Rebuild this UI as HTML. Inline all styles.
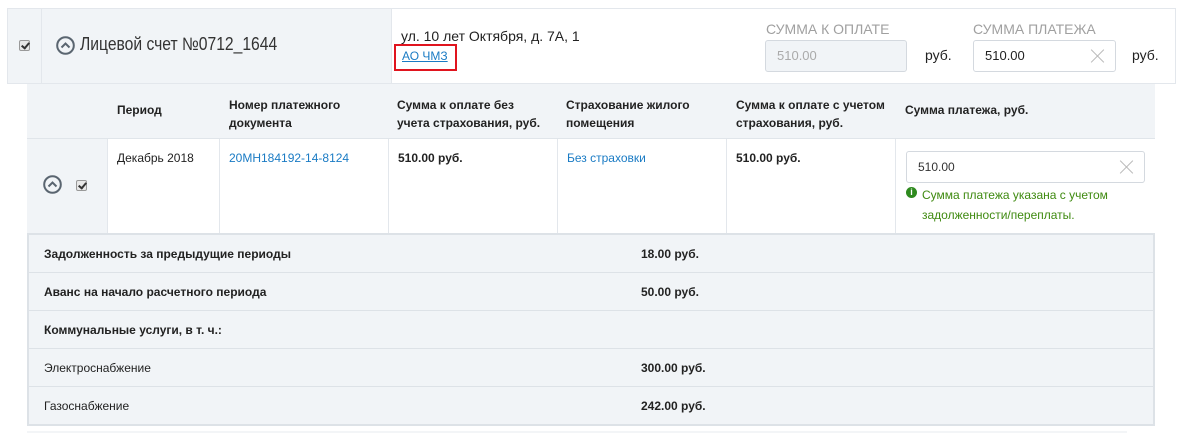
<!DOCTYPE html>
<html><head><meta charset="utf-8"><style>
*{box-sizing:border-box;margin:0;padding:0}
body{width:1194px;height:433px;background:#fff;font-family:"Liberation Sans",Arial,sans-serif;color:#222;position:relative;overflow:hidden}
.a{position:absolute}
.cb{position:absolute;width:11px;height:11px;border:1px solid #999;border-radius:2px;background:#e8e8e8}
.cb:after{content:"";position:absolute;left:3px;top:0px;width:3px;height:6px;border:solid #333;border-width:0 2px 2px 0;transform:rotate(40deg)}
.b{font-weight:bold;font-size:12px}
.blue{color:#1a7bc4}
.inp{position:absolute;border:1px solid #d4d9df;border-radius:3px;background:#fff;font-size:13px;padding-left:11px}
.x{position:absolute;right:10px;top:50%;width:14px;height:14px;margin-top:-7px}
.x:before,.x:after{content:"";position:absolute;left:6px;top:-2px;width:1px;height:18px;background:#bbb;transform:rotate(45deg)}
.x:after{transform:rotate(-45deg)}
.sr{position:absolute;left:29px;width:1124px;height:38px;border-bottom:1px solid #dde2e7;background:#f1f4f7;font-size:12px}
.sr span{position:absolute;top:12px}
</style></head><body>
<div class="a" style="left:7px;top:8px;width:1169px;height:76px;border:1px solid #e3e7ec;background:#fff"></div>
<div class="a" style="left:8px;top:9px;width:383px;height:74px;background:#f1f4f7"></div>
<div class="a" style="left:41px;top:9px;width:1px;height:74px;background:#e3e7ec"></div>
<div class="a" style="left:391px;top:9px;width:1px;height:74px;background:#e3e7ec"></div>
<div class="cb" style="left:19px;top:40px"></div>
<svg class="a" style="left:56px;top:36px" width="19" height="19" viewBox="0 0 19 19"><circle cx="9.5" cy="9.5" r="8.3" fill="none" stroke="#5a6570" stroke-width="2"/><path d="M5.5 11.5 L9.5 7.5 L13.5 11.5" fill="none" stroke="#5a6570" stroke-width="2"/></svg>
<div class="a" style="left:80px;top:34px;font-size:18px;color:#333;transform:scaleX(0.87);transform-origin:0 0;white-space:nowrap">Лицевой счет №0712_1644</div>
<div class="a" style="left:401px;top:28px;font-size:14px;color:#222">ул. 10 лет Октября, д. 7А, 1</div>
<div class="a" style="left:394px;top:44px;width:63px;height:27px;border:2px solid #e0141e"></div>
<div class="a blue" style="left:402px;top:49px;font-size:12px;text-decoration:underline">АО ЧМЗ</div>
<div class="a" style="left:766px;top:21px;font-size:14px;color:#a0a0a0">СУММА К ОПЛАТЕ</div>
<div class="inp" style="left:765px;top:40px;width:142px;height:32px;background:#f1f4f7;color:#aaa;line-height:30px">510.00</div>
<div class="a" style="left:925px;top:47px;font-size:14px">руб.</div>
<div class="a" style="left:973px;top:21px;font-size:14px;color:#a0a0a0">СУММА ПЛАТЕЖА</div>
<div class="inp" style="left:973px;top:40px;width:143px;height:32px;line-height:30px">510.00<div class="x"></div></div>
<div class="a" style="left:1132px;top:47px;font-size:14px">руб.</div>
<div class="a" style="left:27px;top:84px;width:1128px;height:55px;background:#f1f4f7;border-bottom:1px solid #e0e5ea"></div>
<div class="a" style="left:27px;top:139px;width:1128px;height:95px;background:#fff"></div>
<div class="a" style="left:27px;top:139px;width:80px;height:95px;background:#f1f4f7"></div>
<div class="a" style="left:107px;top:139px;width:1px;height:95px;background:#e3e7ec"></div>
<div class="a" style="left:219px;top:139px;width:1px;height:95px;background:#e3e7ec"></div>
<div class="a" style="left:388px;top:139px;width:1px;height:95px;background:#e3e7ec"></div>
<div class="a" style="left:557px;top:139px;width:1px;height:95px;background:#e3e7ec"></div>
<div class="a" style="left:726px;top:139px;width:1px;height:95px;background:#e3e7ec"></div>
<div class="a" style="left:895px;top:139px;width:1px;height:95px;background:#e3e7ec"></div>
<div class="a b" style="left:117px;top:103px">Период</div>
<div class="a b" style="left:229px;top:96px;line-height:18px">Номер платежного<br>документа</div>
<div class="a b" style="left:397px;top:96px;line-height:18px">Сумма к оплате без<br>учета страхования, руб.</div>
<div class="a b" style="left:566px;top:96px;line-height:18px">Страхование жилого<br>помещения</div>
<div class="a b" style="left:736px;top:96px;line-height:18px">Сумма к оплате с учетом<br>страхования, руб.</div>
<div class="a b" style="left:905px;top:103px">Сумма платежа, руб.</div>
<svg class="a" style="left:43px;top:175px" width="19" height="19" viewBox="0 0 19 19"><circle cx="9.5" cy="9.5" r="8.3" fill="none" stroke="#5a6570" stroke-width="2"/><path d="M5.5 11.5 L9.5 7.5 L13.5 11.5" fill="none" stroke="#5a6570" stroke-width="2"/></svg>
<div class="cb" style="left:76px;top:180px"></div>
<div class="a" style="left:117px;top:151px;font-size:12px">Декабрь 2018</div>
<div class="a blue" style="left:229px;top:151px;font-size:12px">20МН184192-14-8124</div>
<div class="a b" style="left:398px;top:151px">510.00 руб.</div>
<div class="a blue" style="left:567px;top:151px;font-size:12px">Без страховки</div>
<div class="a b" style="left:736px;top:151px">510.00 руб.</div>
<div class="inp" style="left:906px;top:151px;width:239px;height:32px;line-height:30px;font-size:12px;color:#333">510.00<div class="x"></div></div>
<div class="a" style="left:906px;top:187px;width:11px;height:11px;border-radius:50%;background:#2e8a1e;color:#fff;font-size:9px;font-weight:bold;text-align:center;line-height:11px">i</div>
<div class="a" style="left:922px;top:185px;font-size:12px;color:#3f8a10;line-height:20px">Сумма платежа указана с учетом<br>задолженности/переплаты.</div>
<div class="a" style="left:27px;top:233px;width:1128px;height:193px;border:2px solid #dde2e7;background:#f1f4f7"></div>
<div class="sr" style="top:235px"><span class="b" style="left:15px">Задолженность за предыдущие периоды</span><span class="b" style="left:612px">18.00 руб.</span></div>
<div class="sr" style="top:273px"><span class="b" style="left:15px">Аванс на начало расчетного периода</span><span class="b" style="left:612px">50.00 руб.</span></div>
<div class="sr" style="top:311px"><span class="b" style="left:15px">Коммунальные услуги, в т. ч.:</span></div>
<div class="sr" style="top:349px"><span style="left:15px">Электроснабжение</span><span class="b" style="left:612px">300.00 руб.</span></div>
<div class="sr" style="top:387px;border-bottom:none;height:37px"><span style="left:15px">Газоснабжение</span><span class="b" style="left:612px">242.00 руб.</span></div>
<div class="a" style="left:27px;top:431px;width:1100px;height:2px;background:#f3f5f7"></div>
</body></html>
